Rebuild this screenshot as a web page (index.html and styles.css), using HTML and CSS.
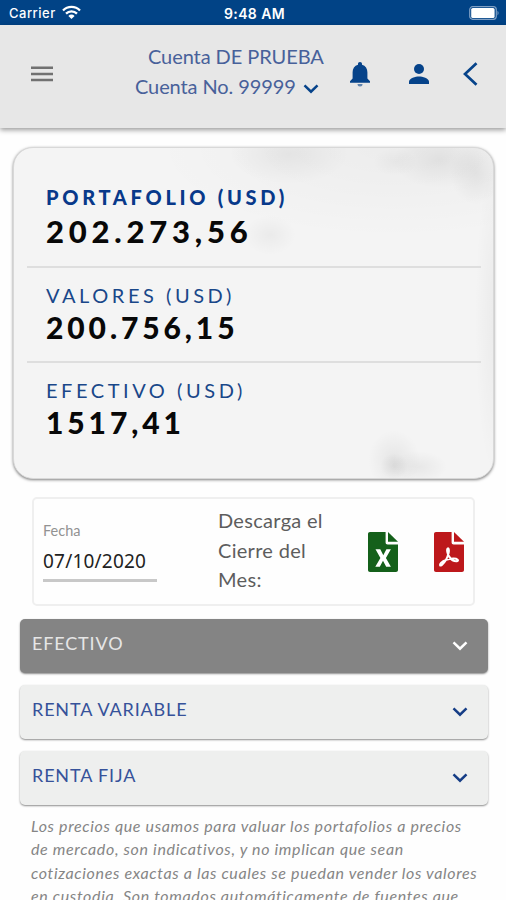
FILE: index.html
```
<!DOCTYPE html>
<html lang="es">
<head>
  <meta charset="UTF-8">
  <title>Portafolio</title>
  <link rel="stylesheet" href="styles.css">
</head>
<body>
  <div class="status">
    <div class="carrier">
      <span>Carrier</span>
      <svg width="19" height="15" viewBox="0 0 19 15" fill="none" stroke="#fff" stroke-width="2.3">
        <path d="M1 5.5a12 12 0 0 1 17 0"/>
        <path d="M4 8.6a7.8 7.8 0 0 1 11 0"/>
        <path d="M9.5 14 6.4 10.9a4.4 4.4 0 0 1 6.2 0z" fill="#fff" stroke="none"/>
      </svg>
    </div>
    <div class="time">9:48 AM</div>
    <div class="battery">
      <svg width="31" height="14" viewBox="0 0 31 14">
        <rect x=".7" y=".7" width="26.6" height="12.6" rx="3" fill="none" stroke="#7f9fc4" stroke-width="1.2"/>
        <rect x="2.2" y="2" width="23.4" height="10" rx="1.6" fill="#fff"/>
        <path d="M28.5 4.8a3 3 0 0 1 0 4.6z" fill="#7f9fc4"/>
      </svg>
    </div>
  </div>

  <header class="topbar">
    <svg class="menu" width="22" height="16" viewBox="0 0 22 16" stroke="#717171" stroke-width="2.5">
      <path d="M0 1.7h22M0 7.9h22M0 14.1h22"/>
    </svg>
    <div class="account">
      <div class="account-name">Cuenta DE PRUEBA</div>
      <div class="account-number">
        <span>Cuenta No. 99999</span>
        <svg width="16" height="10" viewBox="0 0 16 10" fill="none" stroke="#06438a" stroke-width="2.5">
          <path d="M1.5 1.3 8 7.7l6.500-6.400"/>
        </svg>
      </div>
    </div>
    <svg class="bell" width="20" height="25" viewBox="0 0 20 25" fill="#06438a">
      <path d="M10 0c1.300 0 2 .9 2 2v.8c3.600.9 5.400 3.800 5.400 7.500v6.300L20 19.200v1.600H0v-1.600l2.600-2.600v-6.300c0-3.700 1.800-6.600 5.400-7.500V2c0-1.100.7-2 2-2z"/>
      <path d="M7.500 22h5a2.500 2.500 0 0 1-5 0z" opacity=".6"/>
    </svg>
    <svg class="user" width="20" height="20" viewBox="0 0 20 20" fill="#06438a">
      <circle cx="10" cy="5" r="5"/>
      <path d="M0 20v-2.500C0 14.200 6.600 12.400 10 12.400s10 1.800 10 5.100V20z"/>
    </svg>
    <svg class="back" width="15" height="24" viewBox="0 0 15 24" fill="none" stroke="#06438a" stroke-width="2.700">
      <path d="M13.500 1.200 2 12l11.500 10.800"/>
    </svg>
  </header>

  <main>
    <section class="card">
      <div class="amount main-amount">
        <div class="label">PORTAFOLIO (USD)</div>
        <div class="value">202.273,56</div>
      </div>
      <div class="amount">
        <div class="label">VALORES (USD)</div>
        <div class="value">200.756,15</div>
      </div>
      <div class="amount">
        <div class="label">EFECTIVO (USD)</div>
        <div class="value">1517,41</div>
      </div>
    </section>

    <section class="download">
      <div class="date">
        <label>Fecha</label>
        <div class="date-value">07/10/2020</div>
      </div>
      <p class="download-text">Descarga el<br>Cierre del<br>Mes:</p>
      <svg class="excel" width="30" height="40" viewBox="0 0 30 40">
        <path d="M2 0h15.600v10.500c0 1.200.8 2 2 2H30V38c0 1.200-.8 2-2 2H2c-1.200 0-2-.8-2-2V2C0 .8.800 0 2 0z" fill="#14601a"/>
        <path d="M20 0 30 9.700H20z" fill="#14601a"/>
        <path d="M7.500 17.300h4.800l3 5.900 3.100-5.900h4.500l-5 8.700 5 8.800h-4.700l-3.200-6-3.200 6H7.300l5.100-8.800z" fill="#fff"/>
      </svg>
      <svg class="pdf" width="30" height="40" viewBox="0 0 30 40">
        <path d="M2 0h15.600v10.500c0 1.200.8 2 2 2H30V38c0 1.200-.8 2-2 2H2c-1.200 0-2-.8-2-2V2C0 .8.800 0 2 0z" fill="#bd181b"/>
        <path d="M20 0 30 9.700H20z" fill="#bd181b"/>
        <path d="M14 16.300c-1.800.8-.6 5.500 1.200 8.300 1.800 2.700 4.500 5 7.700 4.700 2.400-.4.800-2.900-3.700-2.700-4.800.3-9.300 1.600-12.200 4.300-2.200 2.200-.8 3.600 1.100 1.900 2.500-2.200 5.300-7.300 6.400-11.200.7-2.700.5-5.100-.5-5.300z" fill="none" stroke="#fff" stroke-width="2"/>
      </svg>
    </section>

    <section class="accordion">
      <div class="item active">
        <span>EFECTIVO</span>
        <svg width="16" height="10" viewBox="0 0 16 10" fill="none" stroke="#fff" stroke-width="2.500"><path d="M1.500 1.300 8 7.700l6.500-6.400"/></svg>
      </div>
      <div class="item">
        <span>RENTA VARIABLE</span>
        <svg width="16" height="10" viewBox="0 0 16 10" fill="none" stroke="#153d86" stroke-width="2.500"><path d="M1.500 1.300 8 7.700l6.500-6.400"/></svg>
      </div>
      <div class="item">
        <span>RENTA FIJA</span>
        <svg width="16" height="10" viewBox="0 0 16 10" fill="none" stroke="#153d86" stroke-width="2.500"><path d="M1.500 1.300 8 7.700l6.500-6.400"/></svg>
      </div>
    </section>

    <p class="notice">
      Los precios que usamos para valuar los portafolios a precios<br>
      de mercado, son indicativos, y no implican que sean<br>
      cotizaciones exactas a las cuales se puedan vender los valores<br>
      en custodia. Son tomados automáticamente de fuentes que
    </p>
  </main>
</body>
</html>
```
FILE: styles.css
```
* {
  box-sizing: border-box;
}
body {
  margin: 0;
  height: 900px;
  overflow: hidden;
  background-color: #fefefe;
  font-family: Lato, "Open Sans", sans-serif;
}
svg {
  display: block;
  flex: none;
}
.status {
  height: 25px;
  padding: 1px 6px 0 9px;
  display: grid;
  grid-template-columns: 1fr auto 1fr;
  align-items: center;
  background-color: #014386;
  color: #fff;
  font-family: Inter, sans-serif;
  font-size: 13px;
}
.carrier {
  display: flex;
  align-items: center;
  gap: 6px;
  font-weight: 500;
  letter-spacing: 0.5px;
}
.carrier svg {
  margin-top: -2px;
}
.time {
  font-weight: 600;
  font-size: 14px;
  letter-spacing: 0.4px;
}
.battery {
  justify-self: end;
}
.topbar {
  height: 103px;
  padding: 0 28px 0 31px;
  display: flex;
  align-items: flex-start;
  background-color: #e7e7e7;
  box-shadow: 0 2px 5px rgba(0, 0, 0, 0.4);
}
.menu {
  margin-top: 41px;
}
.account {
  width: 190px;
  margin: 17px 0 0 82px;
  color: #48619a;
  font-size: 20px;
  line-height: 29.5px;
  white-space: nowrap;
}
.account-name {
  padding-left: 13px;
  letter-spacing: -0.08px;
}
.account-number {
  display: flex;
  align-items: center;
  gap: 7px;
  letter-spacing: -0.1px;
}
.account-number svg {
  margin-top: 5px;
}
.bell {
  margin: 37px 0 0 25px;
}
.user {
  margin: 39px 0 0 39px;
}
.back {
  margin: 37px 0 0 34px;
}
.card {
  height: 332px;
  margin: 19px 12px 0 13px;
  padding: 27px 12px 0 13px;
  border: 1px solid #d8d8d8;
  border-radius: 20px;
  background:
    radial-gradient(ellipse 22px 14px at 381px 14px, rgba(0, 0, 0, 0.03), transparent),
    radial-gradient(ellipse 60px 30px at 275px 6px, rgba(0, 0, 0, 0.05), transparent),
    radial-gradient(ellipse 46px 28px at 425px 12px, rgba(0, 0, 0, 0.06), transparent),
    radial-gradient(ellipse 26px 32px at 462px 25px, rgba(0, 0, 0, 0.06), transparent),
    radial-gradient(ellipse 26px 20px at 256px 87px, rgba(0, 0, 0, 0.04), transparent),
    radial-gradient(ellipse 14px 13px at 380px 318px, rgba(0, 0, 0, 0.06), transparent),
    radial-gradient(ellipse 26px 30px at 380px 312px, rgba(0, 0, 0, 0.06), transparent),
    radial-gradient(ellipse 28px 16px at 405px 319px, rgba(0, 0, 0, 0.05), transparent),
    radial-gradient(ellipse 20px 160px at 481px 170px, rgba(0, 0, 0, 0.04), transparent),
    radial-gradient(ellipse 240px 90px at 380px 0, rgba(0, 0, 0, 0.03), transparent),
    #f4f4f4;
  box-shadow: 0 1px 3px rgba(0, 0, 0, 0.5);
}
.amount {
  height: 95px;
  padding: 13px 0 0 19px;
  border-top: 2px solid #dedede;
  white-space: nowrap;
}
.label {
  color: #194789;
  font-size: 20px;
  line-height: 28px;
  letter-spacing: 3.55px;
}
.value {
  color: #080808;
  font-size: 30px;
  line-height: 36px;
  font-weight: 900;
  letter-spacing: 3.9px;
}
.main-amount {
  height: 91px;
  padding-top: 8px;
  border-top: 0;
}
.main-amount .label {
  color: #08398a;
  font-weight: 900;
  letter-spacing: 3.7px;
}
.main-amount .value {
  font-size: 31px;
  line-height: 41px;
  letter-spacing: 4.8px;
}
.download {
  width: 443px;
  height: 109px;
  margin: 18px 0 0 32px;
  padding: 0 9px;
  display: flex;
  align-items: flex-start;
  border: 2px solid #efefef;
  border-radius: 5px;
}
.date {
  width: 114px;
  height: 83px;
  padding-top: 23px;
  border-bottom: 3px solid #c8c8c8;
}
.date label {
  display: block;
  color: #929292;
  font-size: 14.5px;
  line-height: 18px;
}
.date-value {
  margin-top: 8px;
  color: #222;
  font-family: "Noto Sans", sans-serif;
  font-size: 19px;
  line-height: 26px;
  letter-spacing: 0.2px;
}
.download-text {
  width: 120px;
  margin: 7px 0 0 61px;
  color: #5d5d5d;
  font-size: 20px;
  line-height: 29.5px;
  letter-spacing: 0.3px;
}
.excel {
  margin: 33px 0 0 30px;
}
.pdf {
  margin: 33px 0 0 36px;
}
.accordion {
  width: 468px;
  margin: 13px 0 0 20px;
  display: grid;
  gap: 12px;
}
.item {
  height: 54px;
  padding: 10px 20px 0 12px;
  display: flex;
  justify-content: space-between;
  align-items: flex-start;
  border-radius: 5px;
  background-color: #eeefee;
  box-shadow: 0 1px 2px rgba(0, 0, 0, 0.45);
  color: #36529a;
  font-size: 18px;
  line-height: 28px;
  letter-spacing: 0.85px;
}
.item svg {
  margin-top: 12px;
}
.item.active {
  background-color: #848484;
  color: #e6e6e6;
}
.notice {
  margin: 9px 0 0 31px;
  color: #858585;
  font-size: 16px;
  line-height: 23.3px;
  font-style: italic;
  letter-spacing: 0.65px;
  white-space: nowrap;
}
```
